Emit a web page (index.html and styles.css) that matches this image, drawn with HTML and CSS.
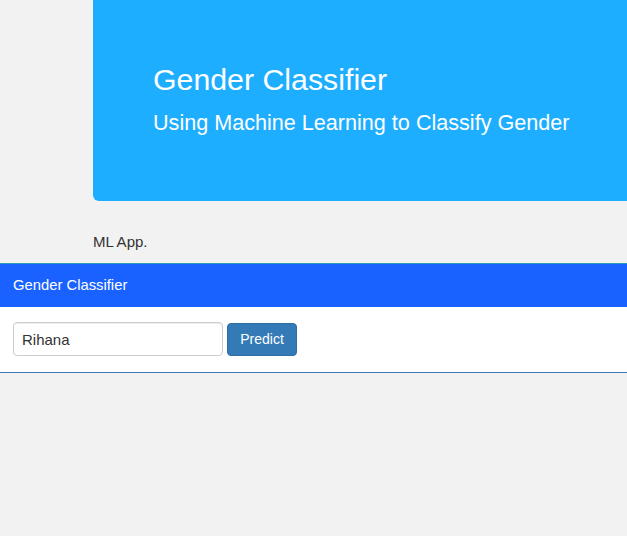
FILE: index.html
```html
<!DOCTYPE html>
<html>
<head>
<meta charset="utf-8">
<link rel="stylesheet" href="styles.css">
</head>
<body>
<div class="hero">
  <h1 class="hero-title">Gender Classifier</h1>
  <p class="hero-sub">Using Machine Learning to Classify Gender</p>
</div>
<p class="app-label">ML App.</p>
<div class="panel">
  <div class="panel-heading">Gender Classifier</div>
  <div class="panel-body">
    <form class="form-row">
      <input class="name-input" type="text" value="Rihana">
      <button class="btn-predict" type="button">Predict</button>
    </form>
  </div>
</div>
</body>
</html>
```
FILE: styles.css
```css
html, body {
  margin: 0;
  padding: 0;
}
body {
  background: #f2f2f2;
  font-family: "Liberation Sans", Arial, sans-serif;
  font-size: 14px;
  color: #333;
  overflow: hidden;
}
.hero {
  margin-left: 93px;
  height: 201px;
  box-sizing: border-box;
  background: #1eaeff;
  border-radius: 0 0 0 6px;
  padding: 60px 0 0 60px;
  color: #fff;
}
.hero-title {
  margin: 0;
  font-size: 30.3px;
  font-weight: 400;
  line-height: 40px;
}
.hero-sub {
  margin: 8px 0 0;
  font-size: 21.6px;
  line-height: 30px;
}
.app-label {
  margin: 32px 0 12px 93px;
  font-size: 15px;
  line-height: 18px;
}
.panel {
  background: #fff;
  border-top: 1px solid #2a9bb5;
  border-bottom: 1px solid #337ab7;
}
.panel-heading {
  background: #1a62ff;
  color: #fff;
  font-size: 14.8px;
  height: 43px;
  line-height: 42px;
  padding: 0 13px;
}
.panel-body {
  padding: 15px 13px 16px;
}
.form-row {
  display: flex;
  align-items: center;
  gap: 4px;
  margin: 0;
}
.name-input {
  width: 210px;
  height: 34px;
  box-sizing: border-box;
  border: 1px solid #ccc;
  border-radius: 4px;
  padding: 6px 8px;
  font-family: "Liberation Sans", Arial, sans-serif;
  font-size: 15px;
  color: #333;
  box-shadow: inset 0 1px 1px rgba(0,0,0,.075);
}
.btn-predict {
  height: 33px;
  box-sizing: border-box;
  background: #337ab7;
  border: 1px solid #2e6da4;
  border-radius: 4px;
  color: #fff;
  font-family: "Liberation Sans", Arial, sans-serif;
  font-size: 14px;
  padding: 6px 12px;
  width: 70px;
}
```
